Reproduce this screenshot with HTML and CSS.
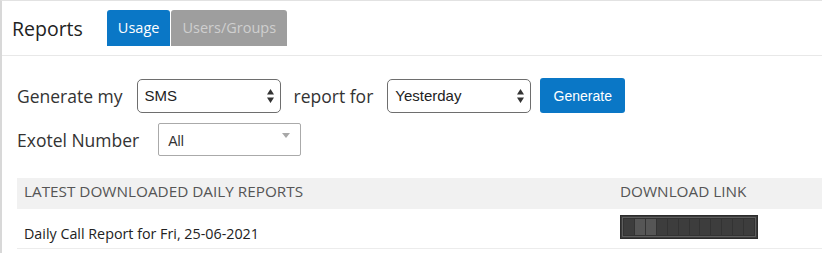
FILE: index.html
```html
<!DOCTYPE html>
<html lang="en">
<head>
    <meta charset="UTF-8">
    <meta name="viewport" content="width=device-width, initial-scale=1.0">
    <title>Reports</title>
    <link rel="stylesheet" href="styles.css">
</head>
<body>
    <div class="page">
        <div class="page-head">
            <h2>Reports</h2>
            <nav class="tabs">
                <a class="tab active" href="#">Usage</a>
                <a class="tab" href="#">Users/Groups</a>
            </nav>
        </div>

        <form class="report-form">
            <div class="form-row">
                <label for="reportType">Generate my</label>
                <div class="select-wrap">
                    <select id="reportType" class="mac-select">
                        <option>SMS</option>
                        <option>Calls</option>
                    </select>
                    <svg class="updown" width="7" height="14" viewBox="0 0 7 14"><path d="M3.5 0 7 5.5H0z M3.5 14 0 8.5h7z" fill="#333"/></svg>
                </div>
                <label for="reportDay" class="gap-label">report for</label>
                <div class="select-wrap">
                    <select id="reportDay" class="mac-select">
                        <option>Yesterday</option>
                        <option>Last 7 days</option>
                    </select>
                    <svg class="updown" width="7" height="14" viewBox="0 0 7 14"><path d="M3.5 0 7 5.5H0z M3.5 14 0 8.5h7z" fill="#333"/></svg>
                </div>
                <button type="button" class="btn-generate">Generate</button>
            </div>
            <div class="form-row">
                <label for="exoNumber">Exotel Number</label>
                <div class="select-wrap">
                    <select id="exoNumber" class="plain-select">
                        <option>All</option>
                    </select>
                    <svg class="caret" width="8" height="5" viewBox="0 0 8 5"><path d="M0 0h8L4 5z" fill="#a8a8a8"/></svg>
                </div>
            </div>
        </form>

        <table class="reports">
            <thead>
                <tr>
                    <th>Latest downloaded daily reports</th>
                    <th class="col-link">Download link</th>
                </tr>
            </thead>
            <tbody>
                <tr>
                    <td>Daily Call Report for Fri, 25-06-2021</td>
                    <td class="col-link">
                        <div class="link-blur">
                            <div class="link-inner">
                                <span></span><span class="lit"></span><span class="lit"></span><span></span>
                                <span></span><span></span><span></span><span></span>
                                <span></span><span></span><span></span><span></span>
                            </div>
                        </div>
                    </td>
                </tr>
            </tbody>
        </table>
    </div>
</body>
</html>
```

FILE: styles.css
```css
* {
    margin: 0;
    padding: 0;
    box-sizing: border-box;
}

body {
    font-family: 'Open Sans', sans-serif;
    background: #fff;
    color: #333;
    overflow: hidden;
}

.page {
    border-top: 1px solid #e2e2e2;
    border-left: 2px solid #d8d8d8;
    height: 253px;
}

.page-head {
    display: flex;
    align-items: center;
    padding: 9px 0 9px 10px;
    border-bottom: 1px solid #e8e8e8;
}

.page-head h2 {
    font-size: 19.5px;
    font-weight: 400;
    color: #222;
}

.tabs {
    display: flex;
    gap: 1px;
    margin-left: 24px;
}

.tab {
    display: block;
    height: 36px;
    line-height: 36px;
    padding: 0 11px;
    font-size: 14.5px;
    color: #cfcfcf;
    background: #9e9e9e;
    border-radius: 3px 3px 0 0;
    text-decoration: none;
}

.tab.active {
    color: #fff;
    background: #0a77c6;
}

/* form */
.report-form {
    padding: 22px 0 0 15px;
}

.form-row {
    display: flex;
    align-items: center;
    margin-bottom: 10px;
}

.form-row label {
    font-size: 17.5px;
    color: #333;
    margin-right: 14px;
}

.form-row:last-child label {
    margin-right: 19px;
}

.form-row .gap-label {
    margin-left: 13px;
}

.select-wrap {
    position: relative;
}

.mac-select {
    appearance: none;
    -webkit-appearance: none;
    display: block;
    width: 144px;
    height: 34px;
    padding: 0 7px;
    font-family: 'Liberation Sans', Arial, sans-serif;
    font-size: 15px;
    color: #222;
    background: #fff;
    border: 1px solid #6e6e6e;
    border-radius: 5px;
}

.updown {
    position: absolute;
    right: 7px;
    top: 10px;
    pointer-events: none;
}

.plain-select {
    appearance: none;
    -webkit-appearance: none;
    display: block;
    width: 143px;
    height: 33px;
    padding: 3px 9px 0;
    font-family: 'Liberation Sans', Arial, sans-serif;
    font-size: 14px;
    color: #333;
    background: #fff;
    border: 1px solid #aaa;
    border-radius: 2px;
}

.caret {
    position: absolute;
    right: 11px;
    top: 10px;
    pointer-events: none;
}

.btn-generate {
    margin-left: 9px;
    width: 85px;
    height: 35px;
    font-family: 'Liberation Sans', Arial, sans-serif;
    font-size: 14px;
    color: #fff;
    background: #0a77c6;
    border: none;
    border-radius: 3px;
    cursor: pointer;
}

/* table */
.reports {
    margin: 22px 0 0 15px;
    width: calc(100% - 15px);
    border-collapse: collapse;
}

.reports th {
    text-align: left;
    font-weight: 400;
    font-size: 15.3px;
    text-transform: uppercase;
    color: #555;
    background: #f1f1f1;
    padding: 3px 7px 8px;
    line-height: 20px;
}

.reports td {
    font-size: 14.3px;
    color: #222;
    line-height: 20px;
    padding: 15px 7px 4px;
    vertical-align: top;
    border-bottom: 1px solid #ececec;
}

.reports .col-link {
    width: 209px;
}

.reports td.col-link {
    padding-top: 6px;
}

.link-blur {
    width: 138px;
    height: 24px;
    padding: 1px;
    background: #3b3b3b;
    border: 1px solid #2c2c2c;
}

.link-inner {
    display: flex;
    gap: 1px;
    height: 100%;
    padding: 1px;
    background: #333;
    border: 1px solid #5e5e5e;
}

.link-inner span {
    flex: 1;
    background: #3d3d3d;
}

.link-inner .lit {
    background: #565656;
}
```
